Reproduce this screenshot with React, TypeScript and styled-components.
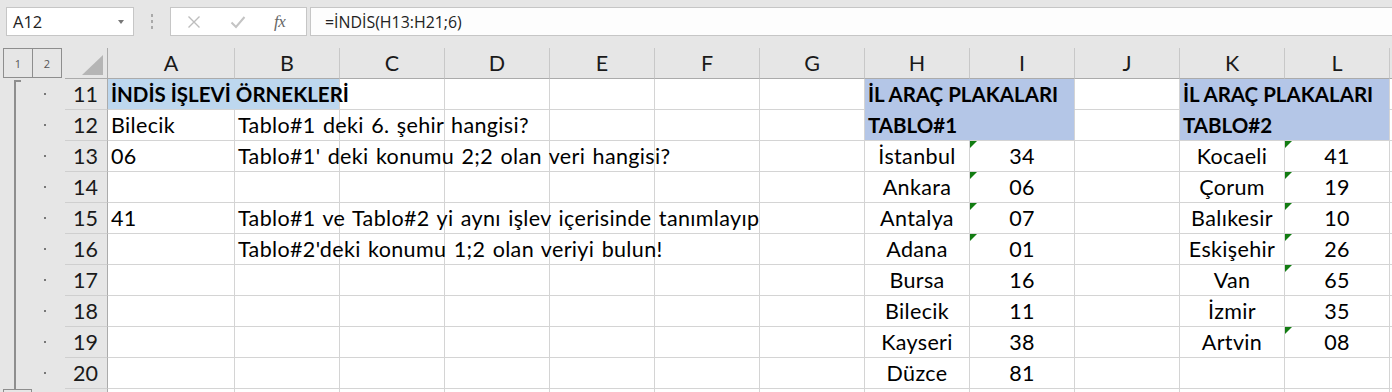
import React from 'react';
import styled, { createGlobalStyle } from 'styled-components';

const GlobalStyle = createGlobalStyle`
  html, body { margin: 0; padding: 0; background: #e6e6e6; }
  body { width: 1392px; height: 392px; overflow: hidden; font-family: Lato, "Noto Sans", sans-serif; }
`;

const BLUE1 = '#bdd7ee';
const BLUE2 = '#b4c6e7';
const GRID = '#d4d4d4';
const HEAD_LINE = '#ababab';

type Cell = { v: string; bold?: boolean; fill?: string; center?: boolean; tri?: boolean };

const COLS = ['A', 'B', 'C', 'D', 'E', 'F', 'G', 'H', 'I', 'J', 'K', 'L', 'M'];
const ROWS = [11, 12, 13, 14, 15, 16, 17, 18, 19, 20, 21];

const data: Record<string, Cell> = {
  A11: { v: 'İNDİS İŞLEVİ ÖRNEKLERİ', bold: true, fill: BLUE1 },
  B11: { v: '', fill: BLUE1 },
  H11: { v: 'İL ARAÇ PLAKALARI', bold: true, fill: BLUE2 },
  I11: { v: '', fill: BLUE2 },
  K11: { v: 'İL ARAÇ PLAKALARI', bold: true, fill: BLUE2 },
  L11: { v: '', fill: BLUE2 },
  A12: { v: 'Bilecik' },
  B12: { v: 'Tablo#1 deki 6. şehir hangisi?' },
  H12: { v: 'TABLO#1', bold: true, fill: BLUE2 },
  I12: { v: '', fill: BLUE2 },
  K12: { v: 'TABLO#2', bold: true, fill: BLUE2 },
  L12: { v: '', fill: BLUE2 },
  A13: { v: '06' },
  B13: { v: "Tablo#1' deki konumu 2;2 olan veri hangisi?" },
  H13: { v: 'İstanbul', center: true },
  I13: { v: '34', center: true, tri: true },
  K13: { v: 'Kocaeli', center: true },
  L13: { v: '41', center: true, tri: true },
  H14: { v: 'Ankara', center: true },
  I14: { v: '06', center: true, tri: true },
  K14: { v: 'Çorum', center: true },
  L14: { v: '19', center: true, tri: true },
  A15: { v: '41' },
  B15: { v: 'Tablo#1 ve Tablo#2 yi aynı işlev içerisinde tanımlayıp' },
  H15: { v: 'Antalya', center: true },
  I15: { v: '07', center: true, tri: true },
  K15: { v: 'Balıkesir', center: true },
  L15: { v: '10', center: true, tri: true },
  B16: { v: "Tablo#2'deki konumu 1;2 olan veriyi bulun!" },
  H16: { v: 'Adana', center: true },
  I16: { v: '01', center: true, tri: true },
  K16: { v: 'Eskişehir', center: true },
  L16: { v: '26', center: true, tri: true },
  H17: { v: 'Bursa', center: true },
  I17: { v: '16', center: true },
  K17: { v: 'Van', center: true },
  L17: { v: '65', center: true, tri: true },
  H18: { v: 'Bilecik', center: true },
  I18: { v: '11', center: true },
  K18: { v: 'İzmir', center: true },
  L18: { v: '35', center: true },
  H19: { v: 'Kayseri', center: true },
  I19: { v: '38', center: true },
  K19: { v: 'Artvin', center: true },
  L19: { v: '08', center: true, tri: true },
  H20: { v: 'Düzce', center: true },
  I20: { v: '81', center: true },
};

/* ---------- formula bar ---------- */

const Page = styled.div`
  display: flex;
  flex-direction: column;
  width: 1392px;
  height: 392px;
  overflow: hidden;
`;

const FormulaBar = styled.div`
  flex: 0 0 48px;
  height: 48px;
  box-sizing: border-box;
  padding: 7px 0 0 6px;
  display: flex;
  align-items: flex-start;
  background: #e6e6e6;
  font-family: "Open Sans", "Noto Sans", sans-serif;
`;

const NameBox = styled.div`
  flex: 0 0 128px;
  height: 29px;
  box-sizing: border-box;
  border: 1px solid #c6c6c6;
  background: #fff;
  display: flex;
  align-items: center;
  justify-content: space-between;
  padding: 0 9px 0 6px;
  font-size: 16.5px;
  color: #222;
`;

const Caret = styled.span`
  width: 0;
  height: 0;
  border-left: 3.5px solid transparent;
  border-right: 3.5px solid transparent;
  border-top: 4px solid #777;
`;

const Grip = styled.div`
  flex: 0 0 36px;
  height: 29px;
  display: flex;
  flex-direction: column;
  align-items: center;
  justify-content: center;
  gap: 3px;
  padding-right: 1px;
  box-sizing: border-box;
`;

const GripDot = styled.span`
  width: 2px;
  height: 3px;
  background: #a9a9a9;
`;

const FuncBox = styled.div`
  flex: 0 0 137px;
  height: 29px;
  box-sizing: border-box;
  border: 1px solid #c6c6c6;
  background: #fff;
  display: flex;
  align-items: center;
  padding-left: 15px;
  gap: 28px;
`;

const IconSlot = styled.span`
  width: 16px;
  height: 16px;
  display: flex;
  align-items: center;
  justify-content: center;
`;

const Fx = styled.span`
  font-family: "Liberation Serif", serif;
  font-style: italic;
  font-size: 17px;
  color: #666;
  letter-spacing: -0.5px;
`;

const FormulaInput = styled.div`
  flex: 1 1 auto;
  margin-left: 3px;
  height: 29px;
  box-sizing: border-box;
  border: 1px solid #c6c6c6;
  border-right: none;
  background: #fdfdfd;
  display: flex;
  align-items: center;
  padding-left: 14px;
  font-size: 15.9px;
  color: #222;
`;

/* ---------- sheet ---------- */

const Sheet = styled.div`
  flex: 0 0 auto;
  display: grid;
  grid-template-columns: 65px 43px 127px repeat(11, 105px) 1fr;
  grid-auto-rows: 31px;
  font-size: 21.5px;
  color: #000;
`;

const OutlineCell = styled.div`
  position: relative;
  background: #e6e6e6;
`;

const LevelButtons = styled.div`
  display: flex;
  padding: 0 0 0 3px;
  height: 30px;
`;

const LevelButton = styled.div<{ $first?: boolean }>`
  width: 30px;
  height: 30px;
  box-sizing: border-box;
  border: 1px solid #8e8e8e;
  margin-left: ${p => (p.$first ? 0 : -1)}px;
  display: flex;
  align-items: center;
  justify-content: center;
  font-family: "Open Sans", sans-serif;
  font-size: 11px;
  color: #555;
`;

const BracketLine = styled.span<{ $top?: boolean }>`
  position: absolute;
  left: 14px;
  top: ${p => (p.$top ? 1 : 0)}px;
  bottom: 0;
  width: 2px;
  background: #8e8e8e;
`;

const BracketTick = styled.span`
  position: absolute;
  left: 14px;
  top: 1px;
  width: 7px;
  height: 2px;
  background: #8e8e8e;
`;

const RowDot = styled.span`
  position: absolute;
  left: 44px;
  top: 14px;
  width: 2px;
  height: 2px;
  background: #777;
`;

const CollapseBox = styled.span`
  position: absolute;
  left: 3px;
  top: 0;
  width: 29px;
  height: 29px;
  box-sizing: border-box;
  border: 1px solid #8e8e8e;
`;

const Corner = styled.div`
  background: #e6e6e6;
  border-right: 1px solid ${HEAD_LINE};
  border-bottom: 1px solid ${HEAD_LINE};
  box-sizing: border-box;
`;

const ColHead = styled.div`
  background: #e6e6e6;
  box-sizing: border-box;
  border-right: 1px solid #c8c8c8;
  border-bottom: 1px solid ${HEAD_LINE};
  display: flex;
  align-items: center;
  justify-content: center;
  color: #1a1a1a;
`;

const RowHead = styled.div`
  background: #e6e6e6;
  box-sizing: border-box;
  border-right: 1px solid ${HEAD_LINE};
  border-bottom: 1px solid #cfcfcf;
  display: flex;
  align-items: center;
  justify-content: flex-end;
  padding-right: 9px;
  color: #1a1a1a;
`;

const DataCell = styled.div<{ $fill?: string; $rf?: boolean; $bf?: boolean; $center?: boolean; $bold?: boolean }>`
  position: relative;
  box-sizing: border-box;
  min-width: 0;
  background: ${p => p.$fill ?? '#fff'};
  border-right: 1px solid ${p => (p.$rf ? p.$fill : GRID)};
  border-bottom: 1px solid ${p => (p.$bf ? p.$fill : GRID)};
  display: flex;
  align-items: center;
  justify-content: ${p => (p.$center ? 'center' : 'flex-start')};
  padding: 0 3px 0 3px;
  font-weight: ${p => (p.$bold ? 700 : 400)};
  font-size: ${p => (p.$bold ? '20.5px' : '21.5px')};
  letter-spacing: ${p => (p.$bold ? '0' : '0.35px')};
  word-spacing: ${p => (p.$bold ? '0' : '1.5px')};
`;

const CellText = styled.span`
  position: relative;
  z-index: 1;
  white-space: nowrap;
`;

const ErrorTri = styled.span`
  position: absolute;
  left: 0;
  top: 0;
  width: 0;
  height: 0;
  border-top: 7px solid #127c12;
  border-right: 7px solid transparent;
`;

const colIdx = (c: string) => COLS.indexOf(c);

function SheetCell({ col, row }: { col: string; row: number }) {
  const cell = data[`${col}${row}`];
  const fill = cell?.fill;
  const right = COLS[colIdx(col) + 1];
  const rf = !!fill && data[`${right}${row}`]?.fill === fill;
  const bf = !!fill && data[`${col}${row + 1}`]?.fill === fill;
  return (
    <DataCell $fill={fill} $rf={rf} $bf={bf} $center={cell?.center} $bold={cell?.bold}>
      {cell?.tri && <ErrorTri />}
      {cell?.v ? <CellText>{cell.v}</CellText> : null}
    </DataCell>
  );
}

export default function App() {
  return (
    <Page>
      <GlobalStyle />
      <FormulaBar>
        <NameBox>
          <span>A12</span>
          <Caret />
        </NameBox>
        <Grip>
          <GripDot />
          <GripDot />
          <GripDot />
        </Grip>
        <FuncBox>
          <IconSlot>
            <svg width="14" height="14" viewBox="0 0 14 14">
              <path d="M1.5 1.5 L12.5 12.5 M12.5 1.5 L1.5 12.5" stroke="#bdbdbd" strokeWidth="1.4" fill="none" />
            </svg>
          </IconSlot>
          <IconSlot>
            <svg width="16" height="14" viewBox="0 0 16 14">
              <path d="M1.5 7.5 L6 12 L14.5 2" stroke="#c4c4c4" strokeWidth="2" fill="none" />
            </svg>
          </IconSlot>
          <Fx>fx</Fx>
        </FuncBox>
        <FormulaInput>=İNDİS(H13:H21;6)</FormulaInput>
      </FormulaBar>
      <Sheet>
        <OutlineCell>
          <LevelButtons>
            <LevelButton $first>1</LevelButton>
            <LevelButton>2</LevelButton>
          </LevelButtons>
        </OutlineCell>
        <Corner>
          <svg width="42" height="30" viewBox="0 0 42 30">
            <polygon points="38,7 38,27 17,27" fill="#b5b5b5" />
          </svg>
        </Corner>
        {COLS.map(c => (
          <ColHead key={c}>{c === 'M' ? '' : c}</ColHead>
        ))}
        {ROWS.map(r => (
          <React.Fragment key={r}>
            <OutlineCell>
              {r < 21 ? (
                <>
                  <BracketLine $top={r === 11} />
                  {r === 11 && <BracketTick />}
                  <RowDot />
                </>
              ) : (
                <CollapseBox />
              )}
            </OutlineCell>
            <RowHead>{r < 21 ? r : ''}</RowHead>
            {COLS.map(c => (
              <SheetCell key={c} col={c} row={r} />
            ))}
          </React.Fragment>
        ))}
      </Sheet>
    </Page>
  );
}
